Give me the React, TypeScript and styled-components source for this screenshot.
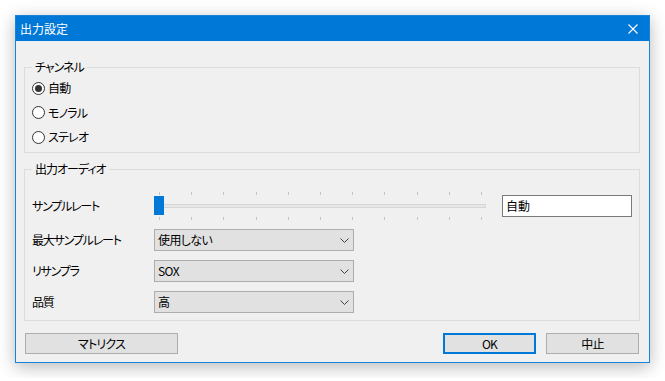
import React from 'react';
import styled, { createGlobalStyle } from 'styled-components';

const GlobalStyle = createGlobalStyle`
  html, body {
    margin: 0;
    padding: 0;
    background: #ffffff;
  }
  body {
    font-family: 'Noto Sans CJK JP', 'Noto Sans', sans-serif;
    font-size: 12px;
    line-height: 16px;
    color: #000;
    font-feature-settings: 'palt';
  }
  * {
    box-sizing: border-box;
  }
`;

const Page = styled.div`
  padding: 15px;
`;

const Window = styled.div`
  width: 635px;
  border: 1px solid #1883d7;
  background: #f0f0f0;
  box-shadow: 0 4px 16px rgba(0, 0, 0, 0.28);
`;

const TitleBar = styled.div`
  height: 25px;
  background: #0078d7;
  color: #fff;
  display: flex;
  align-items: center;
  justify-content: space-between;
  padding: 0 11px 0 4px;
`;

const Title = styled.span`
  font-size: 12px;
`;

const Body = styled.div`
  padding: 18px 9px 8px 8px;
  display: flex;
  flex-direction: column;
`;

const Group = styled.fieldset<{ $top: number; $bottom: number }>`
  margin: 0;
  min-width: 0;
  border: 1px solid #dcdcdc;
  padding: ${(p) => p.$top}px 7px ${(p) => p.$bottom}px 7px;
  & + & {
    margin-top: 8px;
  }
`;

const Legend = styled.legend`
  padding: 0 3px;
  height: 16px;
  line-height: 16px;
  letter-spacing: -1px;
`;

const RadioList = styled.div`
  display: flex;
  flex-direction: column;
`;

const RadioRow = styled.label`
  height: 24.5px;
  display: flex;
  align-items: center;
  gap: 3px;
  letter-spacing: -0.8px;
`;

const RadioCircle = styled.span<{ $checked?: boolean }>`
  width: 13px;
  height: 13px;
  border-radius: 50%;
  border: 1px solid #333;
  background: #fff;
  display: flex;
  align-items: center;
  justify-content: center;
  &::after {
    content: '';
    width: 7px;
    height: 7px;
    border-radius: 50%;
    background: #333;
    display: ${(p) => (p.$checked ? 'block' : 'none')};
  }
`;

const FormGrid = styled.div`
  display: grid;
  grid-template-columns: 122px auto;
  row-gap: 9px;
  align-items: center;
`;

const FieldLabel = styled.span`
  white-space: nowrap;
  letter-spacing: -1.2px;
`;

const SliderRow = styled.div`
  display: flex;
  align-items: center;
  gap: 16px;
`;

const Slider = styled.div`
  width: 332px;
  height: 28px;
  display: flex;
  flex-direction: column;
`;

const TickRow = styled.div<{ $tall: number }>`
  height: ${(p) => p.$tall}px;
  display: flex;
  justify-content: space-between;
  padding: 0 4px 0 5px;
`;

const Tick = styled.span`
  width: 1px;
  height: 3px;
  background: #c4c4c4;
`;

const SliderBody = styled.div`
  position: relative;
  height: 22px;
  display: flex;
  align-items: center;
`;

const Track = styled.div`
  width: 100%;
  height: 4px;
  background: #e7e7e7;
  border: 1px solid #d6d6d6;
`;

const Thumb = styled.div`
  position: absolute;
  left: 0;
  top: 1px;
  width: 10px;
  height: 19px;
  background: #0078d7;
`;

const TextBox = styled.div`
  width: 130px;
  height: 22px;
  border: 1px solid #7a7a7a;
  background: #fff;
  padding-left: 3px;
  display: flex;
  align-items: center;
`;

const Select = styled.div`
  width: 200px;
  height: 22px;
  border: 1px solid #adadad;
  background: #e1e1e1;
  display: flex;
  align-items: center;
  justify-content: space-between;
  padding: 0 4px 0 3px;
`;

const SelectValue = styled.span`
  letter-spacing: -0.6px;
`;

const Footer = styled.div`
  margin-top: 12px;
  padding: 0 1px;
  display: flex;
  justify-content: space-between;
  align-items: center;
`;

const ButtonGroup = styled.div`
  display: flex;
  gap: 10px;
`;

const Button = styled.button<{ $width: number; $default?: boolean }>`
  width: ${(p) => p.$width}px;
  height: 21px;
  margin: 0;
  padding: 0;
  font: inherit;
  letter-spacing: -0.8px;
  color: #000;
  background: #e1e1e1;
  border: ${(p) => (p.$default ? '2px solid #0078d7' : '1px solid #adadad')};
`;

const Chevron = () => (
  <svg width="9" height="5" viewBox="0 0 9 5">
    <polyline points="0.5,0.5 4.5,4.5 8.5,0.5" fill="none" stroke="#404040" strokeWidth="1" />
  </svg>
);

const CloseIcon = () => (
  <svg width="10" height="10" viewBox="0 0 10 10">
    <path d="M0.5 0.5 L9.5 9.5 M9.5 0.5 L0.5 9.5" stroke="#fff" strokeWidth="1.1" />
  </svg>
);

const channels = ['自動', 'モノラル', 'ステレオ'];
const selects = [
  { label: '最大サンプルレート', value: '使用しない' },
  { label: 'リサンプラ', value: 'SOX' },
  { label: '品質', value: '高' },
];

const App = () => {
  const ticks = Array.from({ length: 11 }, (_, i) => i);
  return (
    <>
      <GlobalStyle />
      <Page>
        <Window>
          <TitleBar>
            <Title>出力設定</Title>
            <CloseIcon />
          </TitleBar>
          <Body>
            <Group $top={1} $bottom={2.5}>
              <Legend>チャンネル</Legend>
              <RadioList>
                {channels.map((c, i) => (
                  <RadioRow key={c}>
                    <RadioCircle $checked={i === 0} />
                    {c}
                  </RadioRow>
                ))}
              </RadioList>
            </Group>
            <Group $top={15} $bottom={7}>
              <Legend>出力オーディオ</Legend>
              <FormGrid>
                <FieldLabel>サンプルレート</FieldLabel>
                <SliderRow>
                  <Slider>
                    <TickRow $tall={3}>
                      {ticks.map((t) => (
                        <Tick key={t} />
                      ))}
                    </TickRow>
                    <SliderBody>
                      <Track />
                      <Thumb />
                    </SliderBody>
                    <TickRow $tall={3}>
                      {ticks.map((t) => (
                        <Tick key={t} />
                      ))}
                    </TickRow>
                  </Slider>
                  <TextBox>自動</TextBox>
                </SliderRow>
                {selects.map((s) => (
                  <React.Fragment key={s.label}>
                    <FieldLabel>{s.label}</FieldLabel>
                    <Select>
                      <SelectValue>{s.value}</SelectValue>
                      <Chevron />
                    </Select>
                  </React.Fragment>
                ))}
              </FormGrid>
            </Group>
            <Footer>
              <Button $width={153}>マトリクス</Button>
              <ButtonGroup>
                <Button $width={93} $default>
                  OK
                </Button>
                <Button $width={93}>中止</Button>
              </ButtonGroup>
            </Footer>
          </Body>
        </Window>
      </Page>
    </>
  );
};

export default App;
